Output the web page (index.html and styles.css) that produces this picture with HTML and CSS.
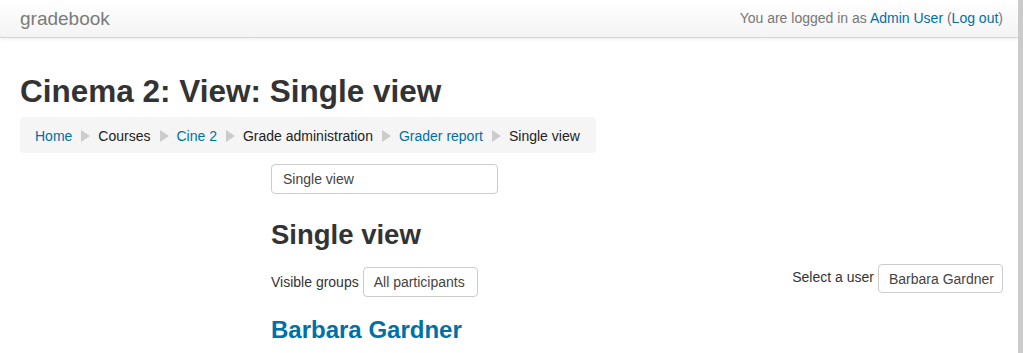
FILE: index.html
```html
<!DOCTYPE html>
<html lang="en">
<head>
    <meta charset="UTF-8">
    <meta name="viewport" content="width=device-width, initial-scale=1.0">
    <title>Cinema 2: View: Single view</title>
    <link rel="stylesheet" href="styles.css">
</head>
<body>
    <header class="navbar">
        <a class="brand" href="#">gradebook</a>
        <div class="login-info">
            You are logged in as <a href="#">Admin User</a> (<a href="#">Log out</a>)
        </div>
    </header>

    <div class="page">
        <h1 class="page-title">Cinema 2: View: Single view</h1>

        <nav class="breadcrumb">
            <a href="#">Home</a>
            <span class="divider"><svg width="9" height="12" viewBox="0 0 9 12"><path d="M0 0 L9 6 L0 12 Z" fill="#cccccc"/></svg></span>
            <span>Courses</span>
            <span class="divider"><svg width="9" height="12" viewBox="0 0 9 12"><path d="M0 0 L9 6 L0 12 Z" fill="#cccccc"/></svg></span>
            <a href="#">Cine 2</a>
            <span class="divider"><svg width="9" height="12" viewBox="0 0 9 12"><path d="M0 0 L9 6 L0 12 Z" fill="#cccccc"/></svg></span>
            <span>Grade administration</span>
            <span class="divider"><svg width="9" height="12" viewBox="0 0 9 12"><path d="M0 0 L9 6 L0 12 Z" fill="#cccccc"/></svg></span>
            <a href="#">Grader report</a>
            <span class="divider"><svg width="9" height="12" viewBox="0 0 9 12"><path d="M0 0 L9 6 L0 12 Z" fill="#cccccc"/></svg></span>
            <span>Single view</span>
        </nav>

        <div class="page-content">
            <aside class="block-region"></aside>

            <section class="region-main">
                <div class="select-box report-select">Single view</div>

                <h2 class="report-title">Single view</h2>

                <div class="selectors">
                    <div class="group-select">
                        <span class="select-label">Visible groups</span>
                        <span class="select-box group-box">All participants</span>
                    </div>
                    <div class="user-select">
                        <span class="select-label">Select a user</span>
                        <span class="select-box user-box">Barbara Gardner</span>
                    </div>
                </div>

                <h3 class="user-heading"><a href="#">Barbara Gardner</a></h3>
            </section>
        </div>
    </div>
</body>
</html>
```

FILE: styles.css
```css
html, body {
    margin: 0;
    padding: 0;
}
body {
    min-height: 100vh;
    box-sizing: border-box;
    border-right: 5px solid #cbcbcb;
    font-family: "Liberation Sans", Arial, sans-serif;
    font-size: 14px;
    line-height: 20px;
    color: #333;
    background-color: #fff;
}
a {
    color: #0070a8;
    text-decoration: none;
}

/* top bar */
.navbar {
    display: flex;
    justify-content: space-between;
    align-items: center;
    height: 37px;
    padding: 0 15px 0 20px;
    background: linear-gradient(#ffffff, #f4f4f4);
    border-bottom: 1px solid #d4d4d4;
    box-shadow: 0 1px 4px rgba(0,0,0,0.07);
}
.brand {
    font-size: 19px;
    color: #7b7b7b;
    margin-top: 1px;
}
.login-info {
    color: #777;
    margin-top: -2px;
}

/* page */
.page {
    padding: 0 15px 0 20px;
}
.page-title {
    margin: 33px 0 6px;
    font-size: 31.5px;
    line-height: 40px;
    font-weight: bold;
    color: #333;
}
.breadcrumb {
    display: inline-flex;
    align-items: center;
    padding: 9px 16px 7px 15px;
    background-color: #f5f5f5;
    border-radius: 4px;
    color: #222;
}
.divider {
    display: flex;
    margin: 0 8px 0 9px;
}

/* two column layout */
.page-content {
    display: grid;
    grid-template-columns: 231px 1fr;
    column-gap: 20px;
    margin-top: 11px;
}

.select-box {
    display: inline-flex;
    align-items: center;
    box-sizing: border-box;
    height: 30px;
    border: 1px solid #ccc;
    border-radius: 4px;
    background-color: #fff;
    color: #444;
}
.report-select {
    display: flex;
    width: 227px;
    padding: 0 11px;
}
.report-title {
    margin: 21px 0 0;
    font-size: 27.5px;
    line-height: 40px;
    font-weight: bold;
}

.selectors {
    display: flex;
    justify-content: space-between;
    align-items: flex-start;
    margin-top: 9px;
}
.group-select,
.user-select {
    display: flex;
    align-items: center;
    gap: 4px;
}
.group-select {
    margin-top: 3px;
}
.group-box {
    padding: 0 12px 0 10px;
}
.user-select .select-label {
    margin-top: -3px;
}
.user-box {
    height: 29px;
    padding: 0 8px 0 10px;
}

.user-heading {
    margin: 18px 0 0;
    font-size: 24px;
    line-height: 30px;
    font-weight: bold;
}
```
